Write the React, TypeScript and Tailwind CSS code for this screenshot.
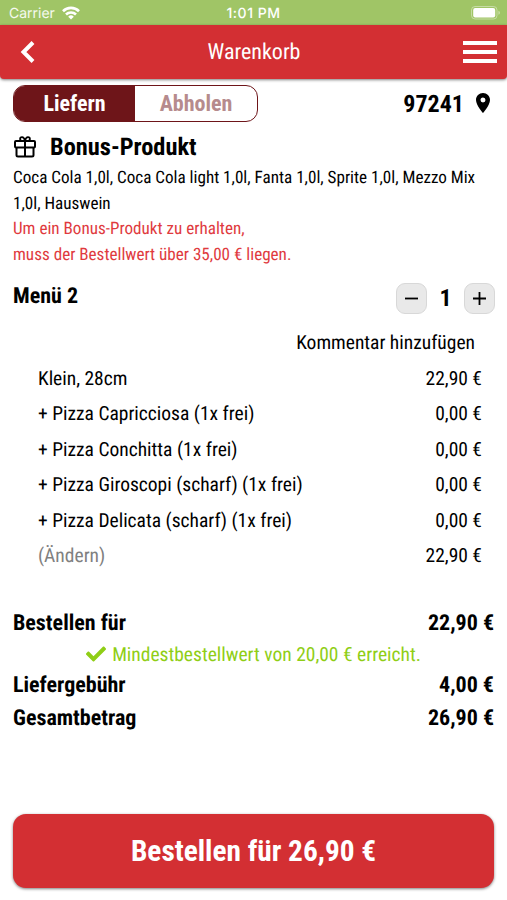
import React, { useState } from 'react';
import { FaCheck } from 'react-icons/fa';
import { MdLocationOn } from 'react-icons/md';

interface Row {
  label: string;
  price: string;
  muted?: boolean;
}

const items: Row[] = [
  { label: 'Klein, 28cm', price: '22,90 €' },
  { label: '+ Pizza Capricciosa (1x frei)', price: '0,00 €' },
  { label: '+ Pizza Conchitta (1x frei)', price: '0,00 €' },
  { label: '+ Pizza Giroscopi (scharf) (1x frei)', price: '0,00 €' },
  { label: '+ Pizza Delicata (scharf) (1x frei)', price: '0,00 €' },
  { label: '(Ändern)', price: '22,90 €', muted: true },
];

const StatusBar: React.FC = () => (
  <div className="h-[25px] bg-[#a0c566] text-white px-[9px] pt-[2px] grid grid-cols-3 items-center font-[Inter,sans-serif] text-[14px]">
    <div className="flex items-center gap-[7px] text-white/90">
      Carrier
      <svg className="w-[18px] h-[14px] mb-px" viewBox="0 0 18 14" fill="none" stroke="white" strokeWidth="2.6">
        <path d="M1 5.2a11.4 11.4 0 0 1 16 0M4 8.5a7.1 7.1 0 0 1 10 0" />
        <path d="M9 13.5 6.2 10.7a4 4 0 0 1 5.6 0z" fill="white" stroke="none" />
      </svg>
    </div>
    <div className="text-center font-medium tracking-[0.5px]">1:01 PM</div>
    <svg className="justify-self-end w-[30px] h-[14px] -mr-[3px] mb-px" viewBox="0 0 30 14" fill="none">
      <rect x="0.5" y="0.5" width="25.5" height="12.5" rx="3.5" stroke="white" strokeOpacity="0.4" />
      <rect x="2.2" y="2" width="22" height="9.5" rx="2" fill="white" />
      <path d="M27.5 4.8v4c1.8-.7 1.8-3.3 0-4" fill="white" fillOpacity="0.5" />
    </svg>
  </div>
);

const Header: React.FC = () => (
  <div className="h-[54px] bg-[#d32f33] rounded-b-[4px] shadow-[0_1px_3px_rgba(0,0,0,0.5)] text-white flex items-center justify-between pl-[20px] pr-[10px]">
    <button className="w-[25px]">
      <svg className="w-[15px] h-[22px]" viewBox="0 0 15 22" fill="none" stroke="currentColor" strokeWidth="4">
        <path d="M13 1.5 3.5 11l9.5 9.5" />
      </svg>
    </button>
    <h1 className="text-[22px] leading-none pt-[2px]">Warenkorb</h1>
    <button className="flex flex-col gap-[5px]">
      <span className="w-[34px] h-[4px] bg-white" />
      <span className="w-[34px] h-[4px] bg-white" />
      <span className="w-[34px] h-[4px] bg-white" />
    </button>
  </div>
);

const GiftIcon: React.FC = () => (
  <svg className="w-[23px] h-[22px]" viewBox="0 0 23 22" fill="none" stroke="currentColor" strokeWidth="2" strokeLinejoin="round">
    <rect x="2" y="5" width="20" height="6.5" rx="1" />
    <path d="M3.5 11.5V19a1.5 1.5 0 0 0 1.5 1.5h14a1.5 1.5 0 0 0 1.5-1.5v-7.5M12 5v15.5" />
    <path d="M12 5C11.5 2.500 10.5 1.2 9 1.2A1.9 1.9 0 0 0 9 5M12 5C12.5 2.500 13.5 1.2 15 1.2A1.9 1.9 0 0 1 15 5" strokeWidth="1.8" />
  </svg>
);

const TotalRow: React.FC<{ label: string; value: string }> = ({ label, value }) => (
  <div className="flex justify-between text-[22px] leading-[33px] font-bold">
    <span>{label}</span>
    <span>{value}</span>
  </div>
);

const App: React.FC = () => {
  const [delivery, setDelivery] = useState(true);
  const [count, setCount] = useState(1);

  const stepClass = 'w-[31px] h-[31px] rounded-[9px] bg-[#e9e9e9] border border-[#d8d8d8] flex items-center justify-center';

  return (
    <div className="w-[507px] h-[900px] overflow-hidden bg-white text-black flex flex-col font-['Roboto_Condensed',Roboto,sans-serif] [font-stretch:75%] [text-rendering:geometricPrecision]">
      <StatusBar />
      <Header />

      <div className="px-[13px] flex flex-col flex-1">
        <div className="mt-[6px] flex items-center justify-between">
          <div className="w-[245px] h-[37px] rounded-[12px] border border-[#6e1519] overflow-hidden flex text-[22px] font-bold">
            <button onClick={() => setDelivery(true)} className={delivery ? 'w-[121px] bg-[#6e1519] text-white' : 'w-[121px] text-[#b68b8d]'}>
              Liefern
            </button>
            <button onClick={() => setDelivery(false)} className={delivery ? 'flex-1 text-[#b68b8d]' : 'flex-1 bg-[#6e1519] text-white'}>
              Abholen
            </button>
          </div>
          <div className="flex items-center gap-[7px] text-[24px] font-bold -mr-px">
            97241
            <MdLocationOn className="w-[24px] h-[24px] mb-[2px]" />
          </div>
        </div>

        <div className="mt-[8px] h-[34px] flex items-center gap-[14px]">
          <GiftIcon />
          <h2 className="text-[24.4px] font-bold">Bonus-Produkt</h2>
        </div>
        <p className="text-[17.1px] leading-[25.5px] mt-[2px]">Coca Cola 1,0l, Coca Cola light 1,0l, Fanta 1,0l, Sprite 1,0l, Mezzo Mix 1,0l, Hauswein</p>
        <p className="text-[17.1px] leading-[25.5px] text-[#e03a3e]">
          Um ein Bonus-Produkt zu erhalten,
          <br />
          muss der Bestellwert über 35,00 € liegen.
        </p>

        <div className="mt-[14px] flex justify-between items-start">
          <h3 className="text-[22px] leading-[26px] mt-[2px] font-bold">Menü 2</h3>
          <div className="flex items-center mt-px -mr-px">
            <button onClick={() => setCount(Math.max(0, count - 1))} className={stepClass}>
              <svg className="w-[13px] h-[13px]" viewBox="0 0 13 13" stroke="currentColor" strokeWidth="1.8"><path d="M0 6.5h13" /></svg>
            </button>
            <span className="w-[37px] text-center text-[24px] leading-[31px] font-bold">{count}</span>
            <button onClick={() => setCount(count + 1)} className={stepClass}>
              <svg className="w-[13px] h-[13px]" viewBox="0 0 13 13" stroke="currentColor" strokeWidth="1.8"><path d="M0 6.5h13M6.5 0v13" /></svg>
            </button>
          </div>
        </div>

        <div className="mt-[11px] pr-[19px] text-right text-[19.5px] leading-[35.5px]">Kommentar hinzufügen</div>
        <div className="pl-[25px] pr-[12px] text-[19.5px] leading-[35.5px]">
          {items.map((item) => (
            <div key={item.label} className="flex justify-between">
              <span className={item.muted ? 'text-[#808080]' : ''}>{item.label}</span>
              <span>{item.price}</span>
            </div>
          ))}
        </div>

        <div className="mt-[33px]">
          <TotalRow label="Bestellen für" value="22,90 €" />
          <div className="flex items-center justify-center gap-[6px] text-[19.5px] leading-[29px] text-[#8fce16]">
            <FaCheck className="w-[20px] h-[20px]" />
            Mindestbestellwert von 20,00 € erreicht.
          </div>
          <TotalRow label="Liefergebühr" value="4,00 €" />
          <TotalRow label="Gesamtbetrag" value="26,90 €" />
        </div>

        <button className="mt-auto mb-[12px] h-[74px] pt-[2px] rounded-[13px] bg-[#d32f33] text-white text-[29.3px] font-bold shadow-[0_1px_3px_rgba(0,0,0,0.5)]">
          Bestellen für 26,90 €
        </button>
      </div>
    </div>
  );
};

export default App;
